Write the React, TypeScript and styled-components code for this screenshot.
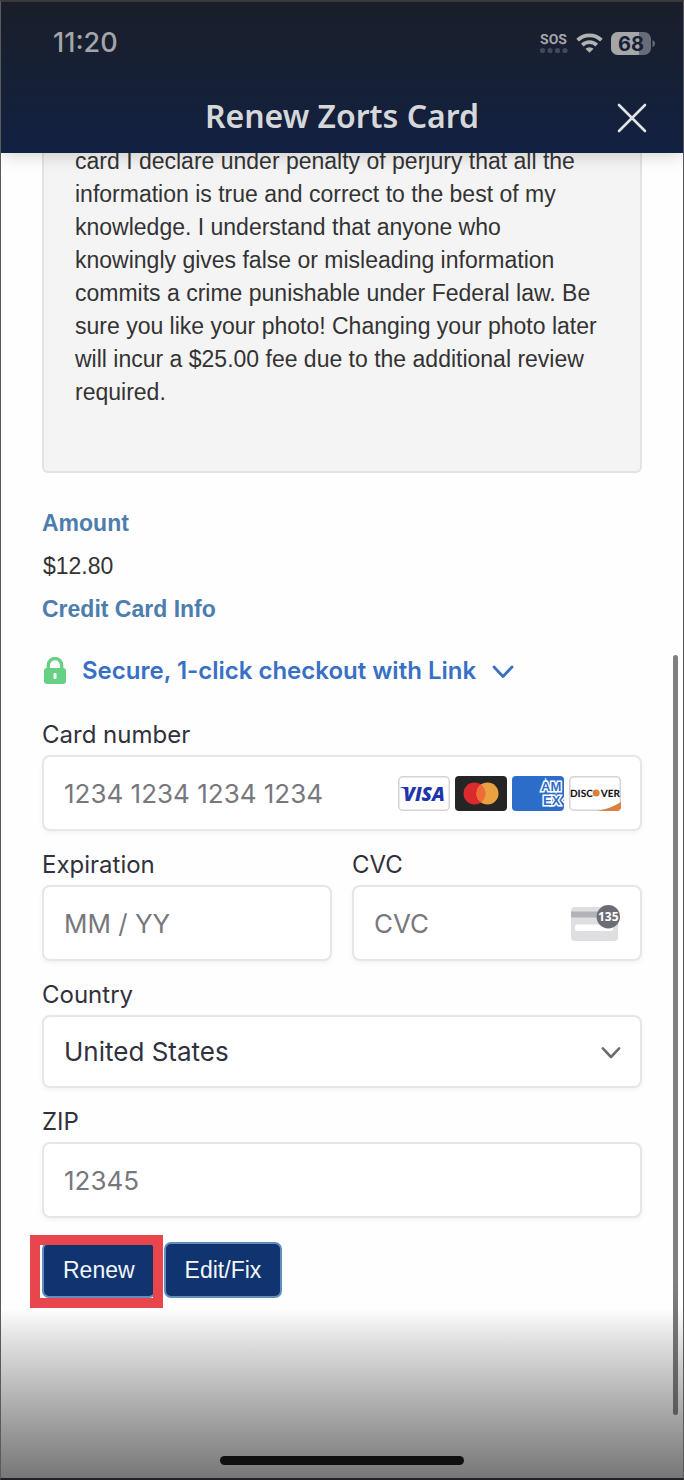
import React from "react";
import styled, { createGlobalStyle } from "styled-components";

const helvetica = `"Liberation Sans", Arial, sans-serif`;
const system = `Inter, "Liberation Sans", sans-serif`;

const GlobalStyle = createGlobalStyle`
  *, *::before, *::after { box-sizing: border-box; }
  body { margin: 0; background: #fff; }
`;

const Screen = styled.div`
  position: relative;
  display: flex;
  flex-direction: column;
  min-height: 100vh;
  border: solid;
  border-width: 2px 1px;
  border-color: #3a3a3b #5a5a5c #202226 #5a5a5c;
  background: #fefefe;
  overflow: hidden;
  color: #333;
  font-family: ${helvetica};
  font-size: 23px;
  line-height: 33px;
`;

const Header = styled.header`
  position: relative;
  z-index: 1;
  background: linear-gradient(#1a1e2a, #162035 50%, #122042);
  box-shadow: 0 1px 18px rgba(0, 0, 0, 0.2);
`;

const StatusBar = styled.div`
  display: flex;
  align-items: center;
  justify-content: space-between;
  height: 82px;
  padding: 0 28px 0 52px;
  color: #a4a5a8;
`;

const Time = styled.time`
  font: 500 27px/32px ${system};
`;

const StatusIcons = styled.div`
  display: flex;
  align-items: center;
  gap: 8px;
`;

const TitleBar = styled.div`
  display: grid;
  grid-template-columns: 1fr auto 1fr;
  align-items: center;
  height: 69px;
  padding: 0 36px 2px;
`;

const Title = styled.h1`
  grid-column: 2;
  margin: 0 0 4px;
  color: #d6d7d9;
  font: 600 32px/40px "Noto Sans", "Open Sans", sans-serif;
`;

const CloseButton = styled.button`
  justify-self: end;
  display: flex;
  padding: 0;
  border: 0;
  background: none;
  color: #e0e2e5;
`;

const Main = styled.main`
  flex: 1;
  padding: 0 41px 10px;
`;

const Declaration = styled.div`
  margin-top: -8px;
  padding: 0 33px 62px 31px;
  border: 2px solid #e3e3e4;
  border-top: 0;
  border-radius: 0 0 6px 6px;
  background: #f4f4f4;

  p { margin: 0; }
`;

const Summary = styled.dl`
  display: grid;
  gap: 10px;
  margin: 34px 0 30px;

  dt { color: #4c7dad; font-weight: 700; }
  dd { margin: 0 1px; }
`;

const LinkButton = styled.button`
  display: flex;
  align-items: center;
  gap: 16px;
  margin-bottom: 34px;
  padding: 0 2px;
  border: 0;
  background: none;
  color: #3770c4;
  font: 600 24px/30px ${system};
`;

const Form = styled.form`
  display: grid;
  gap: 19px;
`;

const Row = styled.div`
  display: grid;
  grid-template-columns: 1fr 1fr;
  gap: 20px;
`;

const Field = styled.div`
  display: grid;
  gap: 5px;
  min-width: 0;

  label { color: #30313d; font: 400 24px/30px ${system}; }
`;

const Control = styled.div<{ $height?: number }>`
  display: flex;
  align-items: center;
  gap: 10px;
  height: ${(p) => p.$height ?? 76}px;
  padding: 0 19px 0 20px;
  border: 2px solid #e6e6e6;
  border-radius: 8px;
  background: #fff;
  box-shadow: 0 2px 5px rgba(0, 0, 0, 0.05);

  input, select {
    flex: 1;
    min-width: 0;
    width: 100%;
    height: 100%;
    padding: 0;
    border: 0;
    outline: 0;
    appearance: none;
    background: transparent;
    color: #30313d;
    font: 400 26px/32px ${system};
  }
  input::placeholder { color: #77787e; opacity: 1; }
  svg { flex: none; }
`;

const SelectControl = styled(Control)`
  select { margin-right: -30px; padding-right: 30px; }
  svg { pointer-events: none; }
`;

const Brands = styled.div`
  display: flex;
  gap: 5px;
`;

const Actions = styled.div`
  display: flex;
  gap: 8px;
  margin-top: 5px;
`;

const Highlighted = styled.div`
  position: relative;

  &::after {
    content: "";
    position: absolute;
    inset: -7px -7px -10px -12px;
    border: 10px solid #e8454c;
    pointer-events: none;
  }
`;

const ActionButton = styled.button`
  height: 56px;
  padding: 0 19px;
  border: 2px solid #5f8fbd;
  border-radius: 7px;
  background: #10346f;
  color: #f4f6f9;
  font: 400 23px/33px ${helvetica};
`;

const Footer = styled.footer`
  display: flex;
  align-items: flex-end;
  justify-content: center;
  height: 170px;
  padding-bottom: 13px;
  background: linear-gradient(#fefefe, #e2e2e2 18%, #c0c0c0 43%, #979797 74%, #777);
`;

const HomeIndicator = styled.div`
  width: 244px;
  height: 9px;
  border-radius: 5px;
  background: #101010;
`;

const ScrollThumb = styled.div`
  position: absolute;
  z-index: 2;
  right: 5px;
  bottom: 63px;
  width: 5px;
  height: 760px;
  border-radius: 3px;
  background: linear-gradient(#808080 82%, #5a5a5a);
`;

const Sos = () => (
  <svg width="28" height="22" viewBox="0 0 28 22" fill="#a4a5a8">
    <text x="13.5" y="12" textAnchor="middle" fontFamily="Liberation Sans Narrow, Roboto, sans-serif" fontSize="14" fontWeight="700" textRendering="geometricPrecision">SOS</text>
    {[2.5, 10, 17.5, 25].map((x) => <circle key={x} cx={x} cy="18.5" r="2.6" fill="#414a5d" />)}
  </svg>
);

const Wifi = () => (
  <svg width="27" height="20" viewBox="0 0 27 20" fill="none" stroke="#b1b2b4" strokeWidth="3.8">
    <path d="M1.6 7.2a17 17 0 0 1 23.8 0" />
    <path d="M6.3 12.2a10.2 10.2 0 0 1 14.4 0" />
    <path d="M13.5 19.8 9.4 15.8a6 6 0 0 1 8.2 0Z" fill="#b1b2b4" stroke="none" />
  </svg>
);

const Battery = () => (
  <svg width="44" height="23" viewBox="0 0 44 23">
    <defs><clipPath id="cell"><rect width="40" height="23" rx="7" /></clipPath></defs>
    <g clipPath="url(#cell)">
      <path fill="#676c78" d="M0 0h40v23H0z" />
      <path fill="#a5a6a8" d="M0 0h28v23H0z" />
    </g>
    <path fill="#676c78" d="M41.5 8q2.5 1 2.5 3.5t-2.5 3.5z" />
    <text x="20" y="18.5" textAnchor="middle" fill="#182035" fontFamily="Inter, sans-serif" fontSize="20" fontWeight="700">68</text>
  </svg>
);

const Close = () => (
  <svg width="30" height="30" viewBox="0 0 30 30" fill="none" stroke="currentColor" strokeWidth="2.6" strokeLinecap="round">
    <path d="m2 2 26 26M28 2 2 28" />
  </svg>
);

const Lock = () => (
  <svg width="22" height="28" viewBox="0 0 22 28" fill="none">
    <path d="M4.3 14V8.2a6.7 6.7 0 0 1 13.4 0V14" stroke="#66d184" strokeWidth="3.3" />
    <rect y="11" width="22" height="16" rx="3" fill="#66d184" />
    <rect x="9.5" y="16" width="3" height="6" rx="1" fill="#fff" />
  </svg>
);

const Chevron = ({ size, color }: { size: number; color: string }) => (
  <svg width={size} height={size} viewBox="0 0 22 22" fill="none" stroke={color} strokeWidth="2.8" strokeLinecap="round" strokeLinejoin="round">
    <path d="m2 7 9 9.5L20 7" />
  </svg>
);

const Visa = () => (
  <svg width="52" height="35" viewBox="0 0 52 35" role="img" aria-label="Visa">
    <rect x=".75" y=".75" width="50.5" height="33.5" rx="4" fill="#fff" stroke="#d3d3d5" strokeWidth="1.5" />
    <text x="26" y="24.5" textAnchor="middle" fontFamily="Open Sans, sans-serif" fontSize="19" fontWeight="800" fontStyle="italic" fill="#1e36ad">VISA</text>
    <path d="M2 11h6.500l1.800 5C8.200 13.500 5.500 11.900 2 11.300Z" fill="#1e36ad" />
  </svg>
);

const Mastercard = () => (
  <svg width="52" height="35" viewBox="0 0 52 35" role="img" aria-label="Mastercard">
    <rect width="52" height="35" rx="4" fill="#252525" />
    <circle cx="19.5" cy="17.5" r="11" fill="#da2a2b" />
    <circle cx="32.5" cy="17.5" r="11" fill="#eba141" />
    <path d="M26 8.600a11 11 0 0 1 0 17.800a11 11 0 0 1 0-17.800" fill="#ee6c37" />
  </svg>
);

const Amex = () => (
  <svg width="52" height="35" viewBox="0 0 52 35" role="img" aria-label="American Express">
    <defs><clipPath id="amex"><rect width="52" height="35" rx="4" /></clipPath></defs>
    <g clipPath="url(#amex)">
      <rect width="52" height="35" fill="#2d6dca" />
      <g fontFamily="Liberation Sans, sans-serif" fontSize="13" fontWeight="700" fill="#2d6dca" stroke="#fff" strokeWidth="3" paintOrder="stroke">
        <text x="29" y="15">AM</text>
        <text x="31" y="29">EX</text>
      </g>
      <path d="m53 21-3 3.200 3 3.200" fill="none" stroke="#fff" strokeWidth="1.500" />
    </g>
  </svg>
);

const Discover = () => (
  <svg width="52" height="35" viewBox="0 0 52 35" role="img" aria-label="Discover">
    <rect x=".75" y=".75" width="50.5" height="33.5" rx="4" fill="#fff" stroke="#d3d3d5" strokeWidth="1.5" />
    <path d="M28 35Q42 32.500 52 26v5a4 4 0 0 1-4 4Z" fill="#d9813d" />
    <g fontFamily="Lato, sans-serif" fontSize="10" fontWeight="900" fill="#191919" textRendering="geometricPrecision">
      <text x="1" y="20.5">DISC</text>
      <text x="51" y="20.5" textAnchor="end">VER</text>
    </g>
    <circle cx="27.2" cy="17" r="3.5" fill="#dc8038" />
  </svg>
);

const CvcCard = () => (
  <svg width="50" height="37" viewBox="0 0 50 37">
    <rect y="2" width="47" height="34" rx="4" fill="#dfdfe1" />
    <path d="M0 6.500h47v6H0z" fill="#b3b3b7" />
    <rect x="4" y="19.5" width="38" height="6.5" rx="2" fill="#fff" />
    <circle cx="37.3" cy="11.7" r="11.7" fill="#6c6c75" />
    <text x="37.3" y="16.4" textAnchor="middle" fill="#fff" fontFamily="Open Sans, sans-serif" fontSize="12" fontWeight="700">135</text>
  </svg>
);

export default function App() {
  return (
    <Screen>
      <GlobalStyle />
      <Header>
        <StatusBar>
          <Time>11:20</Time>
          <StatusIcons><Sos /><Wifi /><Battery /></StatusIcons>
        </StatusBar>
        <TitleBar>
          <Title>Renew Zorts Card</Title>
          <CloseButton type="button" aria-label="Close"><Close /></CloseButton>
        </TitleBar>
      </Header>
      <Main>
        <Declaration>
          <p>
            card I declare under penalty of perjury that all the information is true and correct to the best of my
            knowledge. I understand that anyone who knowingly gives false or misleading information commits a crime
            punishable under Federal law. Be sure you like your photo! Changing your photo later will incur a $25.00
            fee due to the additional review required.
          </p>
        </Declaration>
        <Summary>
          <dt>Amount</dt>
          <dd>$12.80</dd>
          <dt>Credit Card Info</dt>
        </Summary>
        <LinkButton type="button">
          <Lock />
          Secure, 1-click checkout with Link
          <Chevron size={22} color="#3770c4" />
        </LinkButton>
        <Form onSubmit={(e: React.FormEvent) => e.preventDefault()}>
          <Field>
            <label htmlFor="number">Card number</label>
            <Control>
              <input id="number" inputMode="numeric" placeholder="1234 1234 1234 1234" />
              <Brands><Visa /><Mastercard /><Amex /><Discover /></Brands>
            </Control>
          </Field>
          <Row>
            <Field>
              <label htmlFor="expiry">Expiration</label>
              <Control><input id="expiry" placeholder="MM / YY" /></Control>
            </Field>
            <Field>
              <label htmlFor="cvc">CVC</label>
              <Control><input id="cvc" placeholder="CVC" /><CvcCard /></Control>
            </Field>
          </Row>
          <Field>
            <label htmlFor="country">Country</label>
            <SelectControl $height={73}>
              <select id="country" defaultValue="US"><option value="US">United States</option></select>
              <Chevron size={20} color="#6c6c75" />
            </SelectControl>
          </Field>
          <Field>
            <label htmlFor="zip">ZIP</label>
            <Control><input id="zip" inputMode="numeric" placeholder="12345" /></Control>
          </Field>
          <Actions>
            <Highlighted><ActionButton type="submit">Renew</ActionButton></Highlighted>
            <ActionButton type="button">Edit/Fix</ActionButton>
          </Actions>
        </Form>
      </Main>
      <Footer><HomeIndicator /></Footer>
      <ScrollThumb />
    </Screen>
  );
}
